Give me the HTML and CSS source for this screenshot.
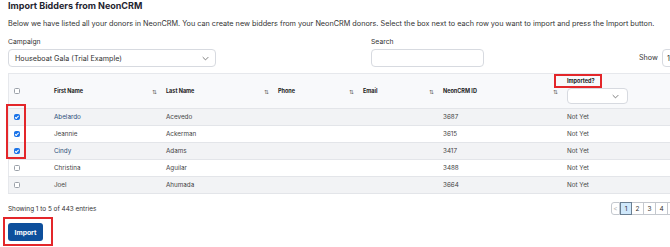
FILE: index.html
```html
<!DOCTYPE html>
<html>
<head>
<meta charset="utf-8">
<link rel="stylesheet" href="styles.css">
</head>
<body>
<h1 class="title">Import Bidders from NeonCRM</h1>
<p class="desc">Below we have listed all your donors in NeonCRM. You can create new bidders from your NeonCRM donors. Select the box next to each row you want to import and press the Import button.</p>

<div class="filters">
  <div class="field campaign">
    <label class="lbl">Campaign</label>
    <div class="select wide"><span>Houseboat Gala (Trial Example)</span>
      <svg class="chev" viewBox="0 0 10 6" width="7" height="5"><path d="M1 1l4 4 4-4" fill="none" stroke="#666" stroke-width="1.2"/></svg>
    </div>
  </div>
  <div class="field search">
    <label class="lbl">Search</label>
    <div class="input"></div>
  </div>
  <div class="show">
    <span class="lbl showlbl">Show</span>
    <div class="select small"><span>10</span></div>
  </div>
</div>

<div class="tablewrap">
  <div class="redbox checks-box"></div>
  <table class="grid">
    <thead>
      <tr>
        <th class="c0"><span class="cb"></span></th>
        <th class="c1"><div class="th">First Name<span class="sort">⇅</span></div></th>
        <th class="c2"><div class="th">Last Name<span class="sort">⇅</span></div></th>
        <th class="c3"><div class="th">Phone<span class="sort">⇅</span></div></th>
        <th class="c4"><div class="th">Email<span class="sort">⇅</span></div></th>
        <th class="c5"><div class="th">NeonCRM ID<span class="sort">⇅</span></div></th>
        <th class="c6">
          <div class="imp">
            <span class="implabel">Imported?</span>
            <div class="select tiny">
              <svg class="chev" viewBox="0 0 10 6" width="7" height="5"><path d="M1 1l4 4 4-4" fill="none" stroke="#666" stroke-width="1.2"/></svg>
            </div>
          </div>
        </th>
      </tr>
    </thead>
    <tbody>
      <tr><td><span class="cb on"></span></td><td class="link">Abelardo</td><td>Acevedo</td><td></td><td></td><td>3687</td><td>Not Yet</td></tr>
      <tr><td><span class="cb on"></span></td><td>Jeannie</td><td>Ackerman</td><td></td><td></td><td>3615</td><td>Not Yet</td></tr>
      <tr><td><span class="cb on"></span></td><td class="link">Cindy</td><td>Adams</td><td></td><td></td><td>3417</td><td>Not Yet</td></tr>
      <tr><td><span class="cb"></span></td><td>Christina</td><td>Aguilar</td><td></td><td></td><td>3488</td><td>Not Yet</td></tr>
      <tr><td><span class="cb"></span></td><td>Joel</td><td>Ahumada</td><td></td><td></td><td>3664</td><td>Not Yet</td></tr>
    </tbody>
  </table>
</div>

<div class="footer">
  <span class="info">Showing 1 to 5 of 443 entries</span>
  <div class="pager">
    <span class="pg prev">&lt;</span>
    <span class="pg active">1</span>
    <span class="pg">2</span>
    <span class="pg">3</span>
    <span class="pg">4</span>
    <span class="pg">5</span>
  </div>
</div>

<div class="btnwrap"><button class="btn">Import</button></div>
</body>
</html>
```

FILE: styles.css
```css
html, body { overflow: hidden; }
body {
  margin: 0;
  padding: 0 0 0 8px;
  width: 760px;
  font-family: Inter, "Noto Sans", sans-serif;
  color: #333;
  background: #fff;
}
.title {
  margin: 0;
  font-size: 9px;
  line-height: 12px;
  font-weight: 700;
  color: #1f2430;
}
.desc {
  margin: 6px 0 0;
  font-size: 7.28px;
  line-height: 12px;
  color: #333;
  white-space: nowrap;
}
.filters {
  display: flex;
  align-items: flex-end;
  margin-top: 7px;
}
.field { display: flex; flex-direction: column; }
.lbl {
  font-size: 6.8px;
  line-height: 10px;
  color: #333;
}
.field .lbl { margin-bottom: 2px; }
.campaign { width: 208px; }
.search { margin-left: 155px; }
.select, .input {
  height: 18px;
  box-sizing: border-box;
  border: 1px solid #d7dae0;
  border-radius: 4px;
  background: #fff;
  display: flex;
  align-items: center;
  font-size: 7.2px;
  color: #333;
}
.select.wide { width: 208px; padding: 0 6px 0 6px; justify-content: space-between; }
.input { width: 113px; }
.show { margin-left: 155px; display: flex; align-items: center; gap: 4px; }
.showlbl { font-size: 7.2px; }
.select.small { width: 30px; padding-left: 4px; }
.chev { display: block; }

.tablewrap {
  position: relative;
  margin-top: 6px;
}
.grid {
  border-collapse: collapse;
  width: 740px;
  table-layout: fixed;
  border: 1px solid #e6e8ec;
  font-size: 6.3px;
  color: #444;
}
.grid thead tr { height: 35px; }
.grid th {
  background: #f8f9fb;
  text-align: left;
  font-weight: 700;
  font-size: 5.5px;
  color: #222;
  padding: 0 2px 0 8px;
  border-bottom: 1px solid #e3e5e9;
}
.grid th.c0 { padding: 0 0 0 5px; }
.grid th.c6 { vertical-align: top; padding-top: 2px; }
.grid tbody tr { height: 17px; }
.grid td {
  padding: 0 8px;
  border-bottom: 1px solid #e3e5e9;
}
.grid td:first-child { padding: 0 0 0 5px; }
.grid tbody tr:nth-child(odd) td { background: #f2f3f5; }
.c0 { width: 32px; }
.c1 { width: 102px; }
.c2 { width: 102px; }
.c3 { width: 75px; }
.c4 { width: 70px; }
.c5 { width: 114px; }
.th { display: flex; justify-content: space-between; align-items: center; }
.sort { font-size: 6px; color: #666; font-weight: 400; letter-spacing: -1px; }
.link { color: #2a4f7a; }
.cb {
  display: block;
  width: 6px;
  height: 6px;
  box-sizing: border-box;
  border: 1px solid #9aa0a8;
  border-radius: 1.5px;
  background: #fff;
}
.cb.on {
  border-color: #1a73e8;
  background: #1a73e8;
  position: relative;
}
.cb.on::after {
  content: "";
  position: absolute;
  left: 1.4px;
  top: 0.2px;
  width: 1.2px;
  height: 2.6px;
  border: solid #fff;
  border-width: 0 1px 1px 0;
  transform: rotate(45deg);
}
.imp {
  display: flex;
  flex-direction: column;
  align-items: flex-start;
}
.implabel {
  font-size: 5.5px;
  line-height: 10px;
  padding: 0 5px 0 11px;
  margin-left: -11px;
  outline: 2px solid #e3262a;
  margin-bottom: 2px;
}
.select.tiny {
  width: 61px;
  height: 16px;
  justify-content: flex-end;
  padding-right: 8px;
}
.redbox {
  position: absolute;
  border: 2px solid #e3262a;
  pointer-events: none;
}
.checks-box {
  left: -2px;
  top: 31px;
  width: 20px;
  height: 55px;
  box-sizing: border-box;
  z-index: 2;
}

.footer {
  display: flex;
  align-items: center;
  width: 672px;
  margin-top: 8px;
}
.info { font-size: 6.4px; color: #333; }
.pager {
  display: flex;
  margin-left: auto;
}
.pg {
  width: 12px;
  height: 13px;
  box-sizing: border-box;
  border: 1px solid #c4c8ce;
  border-left: none;
  font-size: 6.5px;
  display: flex;
  align-items: center;
  justify-content: center;
  color: #333;
  background: #fff;
}
.pg.prev {
  border-left: 1px solid #c4c8ce;
  border-radius: 3px 0 0 3px;
  color: #bbb;
  width: 9px;
}
.pg.active {
  background: #cfe8fb;
  border: 1px solid #6a7f92;
}
.btnwrap {
  display: inline-block;
  margin: 2px 0 0 -5px;
  padding: 4px 8px 3px 3px;
  border: 2px solid #e3262a;
}
.btn {
  display: block;
  width: 35px;
  height: 18px;
  border: none;
  border-radius: 3px;
  background: #0d4f9c;
  color: #fff;
  font-family: Inter, sans-serif;
  font-size: 6.8px;
  font-weight: 700;
  padding: 0;
}
```
